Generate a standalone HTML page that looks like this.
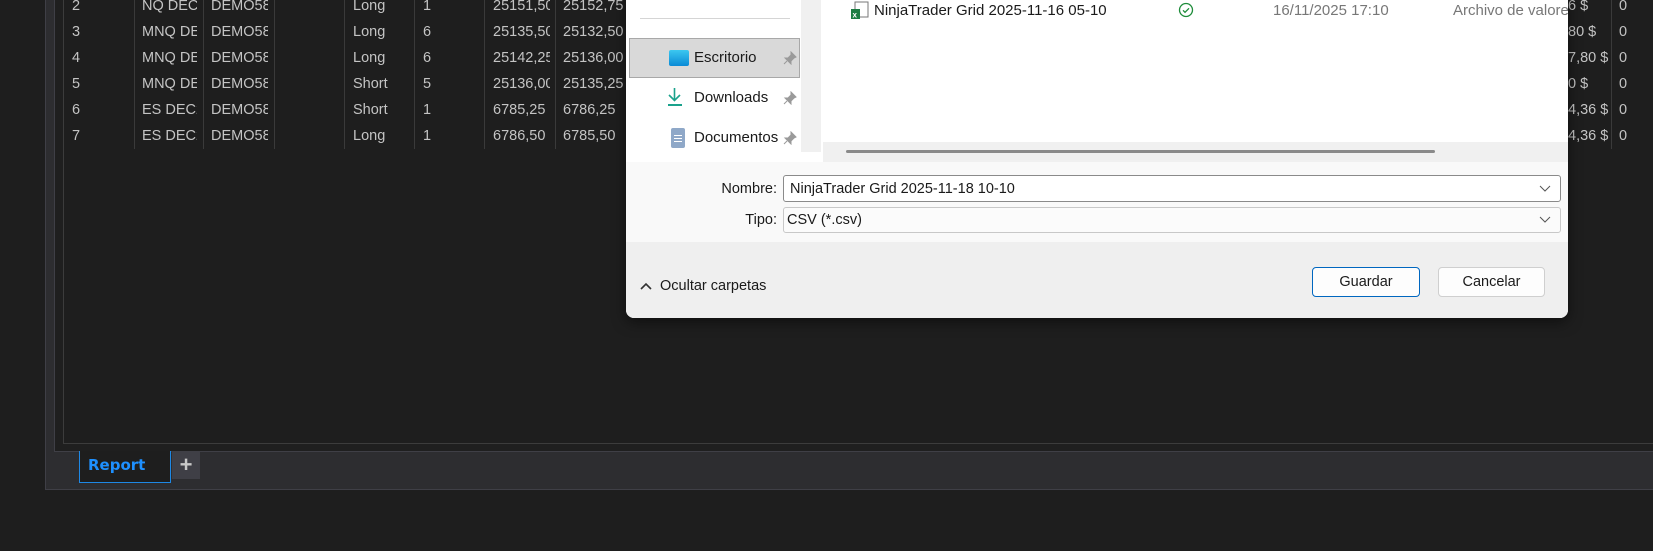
<!DOCTYPE html>
<html><head><meta charset="utf-8"><style>
*{margin:0;padding:0;box-sizing:border-box}
body{width:1653px;height:551px;background:#1e1e1e;position:relative;overflow:hidden;font-family:"Segoe UI","Liberation Sans","DejaVu Sans",sans-serif}
.a{position:absolute}
.t{position:absolute;color:#c4c4c4;font-size:14.5px;line-height:20px;white-space:nowrap}
.vl{position:absolute;top:0;width:1px;height:149px;background:#3a3a3a}
.dt{position:absolute;font-size:15px;line-height:20px;white-space:nowrap;color:#1a1a1a}
</style></head><body>
<div class="a" style="left:45px;top:-2px;width:1620px;height:492px;background:#2d2d30;border:1px solid #3f3f46"></div>
<div class="a" style="left:54px;top:-2px;width:1610px;height:454px;background:#1f1f1f;border:1px solid #3f3f46"></div>
<div class="a" style="left:63px;top:-2px;width:1600px;height:446px;background:#1e1e1e;border:1px solid #3c3c3c"></div>
<div class="vl" style="left:134px"></div><div class="vl" style="left:203px"></div><div class="vl" style="left:274px"></div><div class="vl" style="left:344px"></div><div class="vl" style="left:414px"></div><div class="vl" style="left:484px"></div><div class="vl" style="left:555px"></div><div class="vl" style="left:1611px"></div>
<div style="position:absolute;left:0;top:-4px">
<div class="t" style="left:72px;top:0">2</div><div class="t" style="left:142px;top:0;width:55px;overflow:hidden">NQ DEC</div><div class="t" style="left:211px;top:0;width:57px;overflow:hidden">DEMO58</div><div class="t" style="left:353px;top:0">Long</div><div class="t" style="left:423px;top:0">1</div><div class="t" style="left:493px;top:0;width:57px;overflow:hidden">25151,50</div><div class="t" style="left:563px;top:0">25152,75</div>
<div class="t" style="left:72px;top:26px">3</div><div class="t" style="left:142px;top:26px;width:55px;overflow:hidden">MNQ DEC</div><div class="t" style="left:211px;top:26px;width:57px;overflow:hidden">DEMO58</div><div class="t" style="left:353px;top:26px">Long</div><div class="t" style="left:423px;top:26px">6</div><div class="t" style="left:493px;top:26px;width:57px;overflow:hidden">25135,50</div><div class="t" style="left:563px;top:26px">25132,50</div>
<div class="t" style="left:72px;top:52px">4</div><div class="t" style="left:142px;top:52px;width:55px;overflow:hidden">MNQ DEC</div><div class="t" style="left:211px;top:52px;width:57px;overflow:hidden">DEMO58</div><div class="t" style="left:353px;top:52px">Long</div><div class="t" style="left:423px;top:52px">6</div><div class="t" style="left:493px;top:52px;width:57px;overflow:hidden">25142,25</div><div class="t" style="left:563px;top:52px">25136,00</div>
<div class="t" style="left:72px;top:78px">5</div><div class="t" style="left:142px;top:78px;width:55px;overflow:hidden">MNQ DEC</div><div class="t" style="left:211px;top:78px;width:57px;overflow:hidden">DEMO58</div><div class="t" style="left:353px;top:78px">Short</div><div class="t" style="left:423px;top:78px">5</div><div class="t" style="left:493px;top:78px;width:57px;overflow:hidden">25136,00</div><div class="t" style="left:563px;top:78px">25135,25</div>
<div class="t" style="left:72px;top:104px">6</div><div class="t" style="left:142px;top:104px;width:55px;overflow:hidden">ES DEC25</div><div class="t" style="left:211px;top:104px;width:57px;overflow:hidden">DEMO58</div><div class="t" style="left:353px;top:104px">Short</div><div class="t" style="left:423px;top:104px">1</div><div class="t" style="left:493px;top:104px">6785,25</div><div class="t" style="left:563px;top:104px">6786,25</div>
<div class="t" style="left:72px;top:130px">7</div><div class="t" style="left:142px;top:130px;width:55px;overflow:hidden">ES DEC25</div><div class="t" style="left:211px;top:130px;width:57px;overflow:hidden">DEMO58</div><div class="t" style="left:353px;top:130px">Long</div><div class="t" style="left:423px;top:130px">1</div><div class="t" style="left:493px;top:130px">6786,50</div><div class="t" style="left:563px;top:130px">6785,50</div>
<div class="t" style="left:1568px;top:0">6 $</div><div class="t" style="left:1568px;top:26px">80 $</div><div class="t" style="left:1568px;top:52px">7,80 $</div><div class="t" style="left:1568px;top:78px">0 $</div><div class="t" style="left:1568px;top:104px">4,36 $</div><div class="t" style="left:1568px;top:130px">4,36 $</div>
<div class="t" style="left:1619px;top:0">0</div><div class="t" style="left:1619px;top:26px">0</div><div class="t" style="left:1619px;top:52px">0</div><div class="t" style="left:1619px;top:78px">0</div><div class="t" style="left:1619px;top:104px">0</div><div class="t" style="left:1619px;top:130px">0</div>
</div>
<div class="a" style="left:79px;top:451px;width:92px;height:32px;background:#1e1e1e;border:1px solid #1e88e5;border-top:none"></div>
<div class="a" style="left:88px;top:455px;color:#1e90ff;font-weight:bold;font-size:15px;line-height:20px;font-family:'DejaVu Sans','Liberation Sans',sans-serif">Report</div>
<div class="a" style="left:172px;top:451px;width:28px;height:28px;background:#3f3f46;color:#c8c8c8;font-size:22px;font-weight:bold;line-height:27px;text-align:center">+</div>

<div class="a" style="left:626px;top:-10px;width:942px;height:328px;background:#fff;border-radius:0 0 8px 8px;overflow:hidden;box-shadow:0 4px 14px rgba(0,0,0,.5)">
 <div class="a" style="left:175px;top:10px;width:20px;height:152px;background:#f0f0f0"></div>
 <div class="a" style="left:14px;top:28px;width:150px;height:1px;background:#d5d5d5"></div>
 <div class="a" style="left:3px;top:48px;width:171px;height:40px;background:#d9d9d9;border:1px solid #a8a8a8"></div>
 <div class="a" style="left:43px;top:60px;width:20px;height:16px;background:linear-gradient(#3cc8f0,#0a8ad6);border-radius:2px"></div>
 <div class="dt" style="left:68px;top:58px">Escritorio</div>
 <svg class="a" style="left:40px;top:97px" width="18" height="20"><path d="M8.5 1v12M3 8l5.5 5.5L14 8" stroke="#1aa28c" stroke-width="1.6" fill="none"/><path d="M2 18h14" stroke="#1aa28c" stroke-width="2"/></svg>
 <div class="dt" style="left:68px;top:98px">Downloads</div>
 <div class="a" style="left:45px;top:138px;width:14px;height:20px;background:#8fa8c8;border-radius:2px"></div>
 <div class="a" style="left:48px;top:145px;width:8px;height:1px;background:#fff;box-shadow:0 3px 0 #fff,0 6px 0 #fff"></div>
 <div class="dt" style="left:68px;top:138px">Documentos</div>
 <svg class="a" style="left:157px;top:61px" width="14" height="14"><path d="M8 1l5 5-2 1-3 3 0 3-6-6 3 0 3-3z M4 10l-3 3" fill="#9a9a9a" stroke="#9a9a9a"/></svg>
 <svg class="a" style="left:157px;top:101px" width="14" height="14"><path d="M8 1l5 5-2 1-3 3 0 3-6-6 3 0 3-3z M4 10l-3 3" fill="#9a9a9a" stroke="#9a9a9a"/></svg>
 <svg class="a" style="left:157px;top:141px" width="14" height="14"><path d="M8 1l5 5-2 1-3 3 0 3-6-6 3 0 3-3z M4 10l-3 3" fill="#9a9a9a" stroke="#9a9a9a"/></svg>
 <svg class="a" style="left:224px;top:11px" width="20" height="20"><rect x="5" y="1" width="13" height="15" fill="#fff" stroke="#777"/><rect x="1" y="8" width="9" height="10" fill="#1d7c43"/><text x="2.5" y="16.5" font-size="8" fill="#fff" font-family="Liberation Sans" font-weight="bold">x</text></svg>
 <div class="dt" style="left:248px;top:11px">NinjaTrader Grid 2025-11-16 05-10</div>
 <svg class="a" style="left:552px;top:12px" width="16" height="16"><circle cx="8" cy="8" r="6.5" stroke="#1e8c3a" stroke-width="1.3" fill="none"/><path d="M5 8.3l2 2 4-4" stroke="#1e8c3a" stroke-width="1.3" fill="none"/></svg>
 <div class="dt" style="left:647px;top:11px;color:#777">16/11/2025 17:10</div>
 <div class="dt" style="left:827px;top:11px;color:#777">Archivo de valores</div>
 <div class="a" style="left:197px;top:152px;width:745px;height:20px;background:#f0f0f0"></div>
 <div class="a" style="left:220px;top:160px;width:589px;height:3px;background:#8a8a8a;border-radius:2px"></div>
 <div class="a" style="left:0;top:172px;width:942px;height:80px;background:#f9f9f9"></div>
 <div class="a" style="left:0;top:252px;width:942px;height:80px;background:#efefef"></div>
 <div class="dt" style="left:0;width:151px;text-align:right;top:189px;font-size:14.5px">Nombre:</div>
 <div class="a" style="left:157px;top:185px;width:778px;height:27px;background:#fff;border:1px solid #8a8a8a;border-radius:3px"></div>
 <div class="dt" style="left:164px;top:189px;font-size:14.5px">NinjaTrader Grid 2025-11-18 10-10</div>
 <div class="dt" style="left:0;width:151px;text-align:right;top:220px;font-size:14.5px">Tipo:</div>
 <div class="a" style="left:157px;top:217px;width:778px;height:26px;background:#fbfbfb;border:1px solid #c8c8c8;border-radius:3px"></div>
 <div class="dt" style="left:161px;top:220px;font-size:14.5px">CSV (*.csv)</div>
 <svg class="a" style="left:913px;top:195px" width="12" height="8"><path d="M1 1l5 5 5-5" stroke="#555" fill="none"/></svg>
 <svg class="a" style="left:913px;top:226px" width="12" height="8"><path d="M1 1l5 5 5-5" stroke="#555" fill="none"/></svg>
 <svg class="a" style="left:14px;top:292px" width="12" height="8"><path d="M1 7l5-5 5 5" stroke="#333" stroke-width="1.6" fill="none"/></svg>
 <div class="dt" style="left:34px;top:286px;font-size:14.5px">Ocultar carpetas</div>
 <div class="a" style="left:686px;top:277px;width:108px;height:30px;background:#fdfdfd;border:1px solid #0067c0;border-radius:4px;font-size:14.5px;line-height:28px;text-align:center;color:#1a1a1a">Guardar</div>
 <div class="a" style="left:812px;top:277px;width:107px;height:30px;background:#fdfdfd;border:1px solid #cfcfcf;border-radius:4px;font-size:14.5px;line-height:28px;text-align:center;color:#1a1a1a">Cancelar</div>
</div>
</body></html>
